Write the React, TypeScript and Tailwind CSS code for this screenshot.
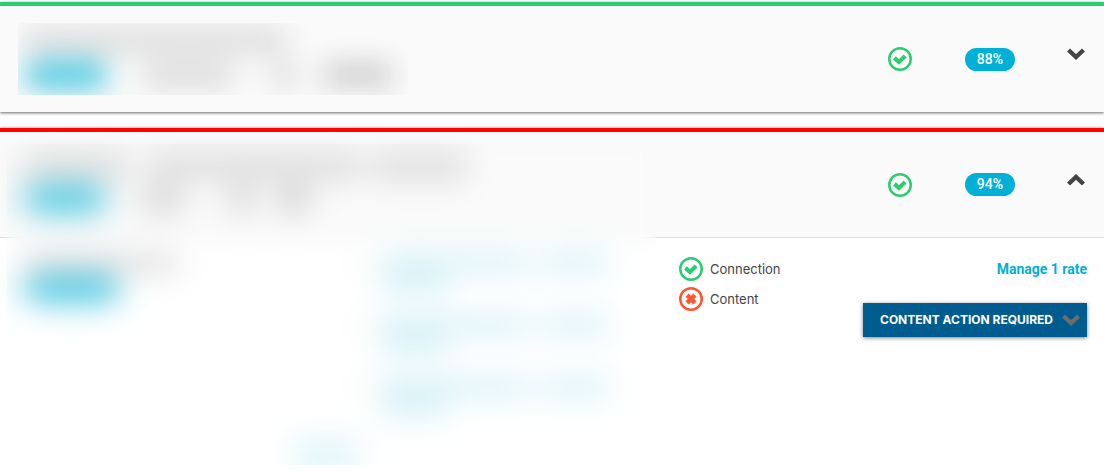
import { useState } from "react";

function CheckCircle({ label }: { label?: string }) {
  return (
    <svg className="size-6 shrink-0" viewBox="0 0 24 24" fill="none" stroke="#2ecc71" role="img" aria-label={label}>
      <circle cx="12" cy="12" r="10.75" strokeWidth="2.5" />
      <path d="M6.4 10.9 10.9 14.9 17.2 8.9" strokeWidth="4.2" strokeLinejoin="miter" />
    </svg>
  );
}

function CrossCircle() {
  return (
    <svg className="size-6 shrink-0" viewBox="0 0 24 24" fill="none" stroke="#ff5630" aria-hidden="true">
      <circle cx="12" cy="12" r="10.75" strokeWidth="2.5" />
      <path d="M8.1 8.1 15.9 15.9M15.9 8.1 8.1 15.9" strokeWidth="4.4" />
    </svg>
  );
}

function Chevron({ up = false, color }: { up?: boolean; color: string }) {
  return (
    <svg className="h-3 w-[18px] shrink-0" viewBox="0 0 18 12" fill="none" stroke={color} aria-hidden="true">
      <path d={up ? "M1.5 10 9 3 16.5 10" : "M1.5 2 9 9 16.5 2"} strokeWidth="4.4" />
    </svg>
  );
}

function HeaderControls({ score, open, onToggle }: { score: number; open: boolean; onToggle: () => void }) {
  return (
    <div className="flex items-center pr-[19px]">
      <CheckCircle label="Connected" />
      <div className="flex w-[103px] justify-end">
        <span className="rounded-full bg-[#00b0d6] px-3 font-['Roboto','Liberation_Sans',sans-serif] text-[14px] leading-[23px] font-medium text-white">
          {score}%
        </span>
      </div>
      <button
        type="button"
        aria-expanded={open}
        aria-label="Toggle details"
        onClick={onToggle}
        className="ml-[52px] cursor-pointer pb-[10px]"
      >
        <Chevron up={open} color="#444444" />
      </button>
    </div>
  );
}

function LinkLines() {
  return (
    <li className="flex gap-3">
      <div className="mt-[3px] size-2 bg-[#dddddd]" />
      <div className="flex flex-col gap-1">
        <div className="flex gap-3">
          <div className="h-4 w-[148px] bg-[#cdeef5]" />
          <div className="h-4 w-[66px] bg-[#cdeef5]" />
        </div>
        <div className="h-4 w-16 bg-[#cdeef5]" />
      </div>
    </li>
  );
}

export default function App() {
  const [firstOpen, setFirstOpen] = useState(false);
  const [secondOpen, setSecondOpen] = useState(true);

  return (
    <main className="flex flex-col gap-4 bg-white pt-[2px] font-['Inter','Liberation_Sans',sans-serif] text-[#444444]">
      <article className="border-t-4 border-[#2ecc71] shadow-[0_1px_3px_rgba(0,0,0,0.6)]">
        <header className="flex h-[106px] items-center justify-between bg-[#fafafa]">
          <div className="ml-[18px] h-[72px] overflow-hidden pr-4">
            <div className="flex flex-col gap-[10px] pt-2 pl-[6px] blur-[14px]">
              <div className="h-5 w-[262px] bg-[#d6d6d6]" />
              <div className="flex items-center">
                <div className="h-7 w-[84px] rounded-full bg-[#4cc9e2]" />
                <div className="ml-9 h-5 w-[88px] bg-[#d4d4d4]" />
                <div className="ml-10 h-5 w-6 bg-[#d4d4d4]" />
                <div className="ml-7 h-5 w-[68px] bg-[#c4c4c4]" />
              </div>
            </div>
          </div>
          <HeaderControls score={88} open={firstOpen} onToggle={() => setFirstOpen(!firstOpen)} />
        </header>
      </article>

      <article className="relative border-t-4 border-[#ff0000] shadow-[0_-1px_2px_rgba(0,0,0,0.25)]">
        <header className="flex h-[106px] items-center justify-between border-b border-[#dddddd] bg-[#fafafa]">
          <div className="flex flex-col gap-2 pl-6 blur-[12px]">
            <div className="flex gap-5">
              <div className="h-5 w-[104px] bg-[#d4d4d4]" />
              <div className="h-5 w-[212px] bg-[#d4d4d4]" />
              <div className="-ml-2 h-5 w-[94px] bg-[#d4d4d4]" />
            </div>
            <div className="flex items-center">
              <div className="h-7 w-[82px] rounded-full bg-[#4cc9e2]" />
              <div className="ml-9 h-5 w-10 bg-[#cccccc]" />
              <div className="ml-12 h-5 w-6 bg-[#c8c8c8]" />
              <div className="ml-7 h-5 w-6 bg-[#b8b8b8]" />
            </div>
          </div>
          <HeaderControls score={94} open={secondOpen} onToggle={() => setSecondOpen(!secondOpen)} />
        </header>

        {secondOpen && (
          <div className="flex h-[227px] overflow-hidden">
            <div className="flex flex-1 pl-6 blur-[12px]">
              <div className="flex w-[270px] flex-col gap-1 pt-[17px]">
                <div className="h-4 w-[154px] bg-[#d4d4d4]" />
                <div className="h-7 w-24 rounded-full bg-[#4cc9e2]" />
                <div className="mt-[136px] ml-auto h-4 w-16 shrink-0 translate-x-full bg-[#cceef5]" />
              </div>
              <ul className="ml-[68px] flex flex-col gap-[26px] pt-[17px]">
                <LinkLines />
                <LinkLines />
                <LinkLines />
              </ul>
            </div>

            <div className="flex w-[425px] shrink-0 items-start justify-between pt-[19px] pr-[17px]">
              <ul className="flex flex-col gap-[6px] text-[13px] leading-6">
                <li className="flex items-center gap-[7px]">
                  <CheckCircle />
                  Connection
                </li>
                <li className="flex items-center gap-[7px]">
                  <CrossCircle />
                  Content
                </li>
              </ul>
              <div className="flex flex-col items-end gap-[22px]">
                <a
                  href="#rates"
                  className="font-['Roboto','Liberation_Sans',sans-serif] text-[14px] leading-6 font-bold text-[#00b0d6]"
                >
                  Manage 1 rate
                </a>
                <button
                  type="button"
                  className="flex h-[34px] w-[224px] cursor-pointer items-center justify-between bg-[#005b8e] pr-[7px] pl-[17px] text-[12px] font-bold whitespace-nowrap text-white shadow-[0_1px_4px_rgba(0,0,0,0.5)]"
                >
                  CONTENT ACTION REQUIRED
                  <Chevron color="#6c6c6c" />
                </button>
              </div>
            </div>
          </div>
        )}
        <div className="absolute top-3 right-[448px] bottom-0 left-[7px] backdrop-blur-[10px]" />
      </article>
    </main>
  );
}
